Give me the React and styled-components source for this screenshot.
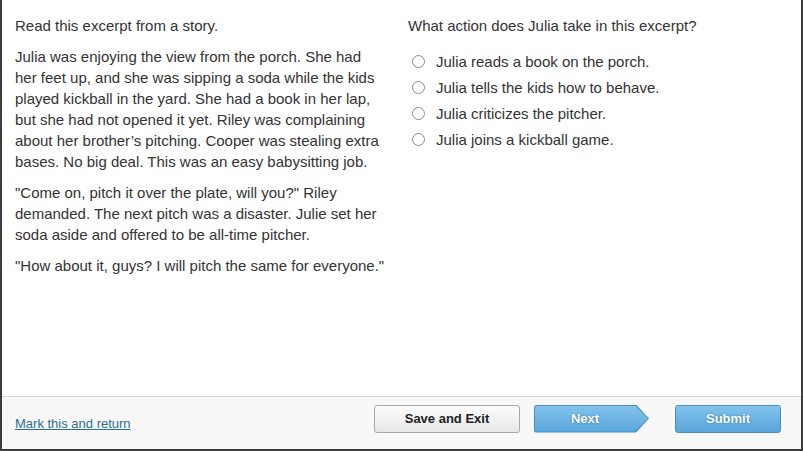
import styled, { createGlobalStyle } from 'styled-components';

const GlobalStyle = createGlobalStyle`
    html, body {
        margin: 0;
        padding: 0;
        background: #fff;
    }
    * {
        box-sizing: border-box;
    }
`;

const Frame = styled.div`
    width: 803px;
    height: 451px;
    display: flex;
    flex-direction: column;
    border-left: 2px solid #3c3c3c;
    border-right: 2px solid #3c3c3c;
    border-bottom: 2px solid #3c3c3c;
    font-family: Arial, 'Liberation Sans', sans-serif;
    color: #333;
    background: #fff;
`;

const Content = styled.div`
    flex: 1;
    display: grid;
    grid-template-columns: 371px 1fr;
    column-gap: 22px;
    padding: 15px 13px 0;
`;

const Passage = styled.div``;

const Para = styled.p`
    margin: 0 0 10px;
    font-size: 15px;
    line-height: 21px;
`;

const Question = styled.div``;

const Prompt = styled.p`
    margin: 0 0 12px;
    font-size: 15px;
    line-height: 21px;
`;

const Options = styled.div`
    display: flex;
    flex-direction: column;
`;

const Option = styled.label`
    display: flex;
    align-items: center;
    height: 26px;
    font-size: 15px;
    cursor: pointer;
`;

const Radio = styled.span`
    width: 13px;
    height: 13px;
    border: 1px solid #8a8a8a;
    border-radius: 50%;
    background: #fff;
    margin: 0 11px 0 4px;
    flex-shrink: 0;
`;

const Footer = styled.div`
    height: 53px;
    border-top: 1px solid #d6d6d6;
    background: #f8f8f8;
    display: flex;
    align-items: center;
    padding: 0 13px;
`;

const MarkLink = styled.a`
    font-size: 13px;
    color: #2b7193;
    text-decoration: underline;
    margin-top: 1px;
    cursor: pointer;
`;

const Buttons = styled.div`
    margin-left: auto;
    display: flex;
    align-items: center;
    margin-right: 7px;
    margin-top: -9px;
`;

const SaveButton = styled.button`
    width: 146px;
    height: 28px;
    border: 1px solid #a8a8a8;
    border-radius: 3px;
    background: linear-gradient(#fdfdfd, #e6e6e6);
    font-family: Arial, 'Liberation Sans', sans-serif;
    font-weight: 700;
    font-size: 13px;
    color: #222;
    cursor: pointer;
`;

const NextOuter = styled.div`
    width: 115px;
    height: 28px;
    margin-left: 14px;
    padding: 1px;
    background: #4b8dbf;
    border-radius: 3px 0 0 3px;
    clip-path: polygon(0 0, calc(100% - 13px) 0, 100% 50%, calc(100% - 13px) 100%, 0 100%);
`;

const NextInner = styled.button`
    width: 100%;
    height: 100%;
    border: none;
    padding: 0 13px 0 0;
    border-radius: 2px 0 0 2px;
    background: linear-gradient(#82c3ed, #5aa6dc);
    clip-path: polygon(0 0, calc(100% - 13px) 0, 100% 50%, calc(100% - 13px) 100%, 0 100%);
    font-family: Arial, 'Liberation Sans', sans-serif;
    font-weight: 700;
    font-size: 13px;
    color: #fff;
    text-shadow: 0 0 2px rgba(40, 90, 140, 0.8);
    cursor: pointer;
`;

const SubmitButton = styled.button`
    width: 106px;
    height: 28px;
    margin-left: 26px;
    border: 1px solid #4b8dbf;
    border-radius: 3px;
    background: linear-gradient(#82c3ed, #5aa6dc);
    font-family: Arial, 'Liberation Sans', sans-serif;
    font-weight: 700;
    font-size: 13px;
    color: #fff;
    text-shadow: 0 0 2px rgba(40, 90, 140, 0.8);
    cursor: pointer;
`;

const options = [
    'Julia reads a book on the porch.',
    'Julia tells the kids how to behave.',
    'Julia criticizes the pitcher.',
    'Julia joins a kickball game.',
];

const App = () => {
    return (
        <>
            <GlobalStyle />
            <Frame>
                <Content>
                    <Passage>
                        <Para>Read this excerpt from a story.</Para>
                        <Para>
                            Julia was enjoying the view from the porch. She had
                            her feet up, and she was sipping a soda while the
                            kids played kickball in the yard. She had a book in
                            her lap, but she had not opened it yet. Riley was
                            complaining about her brother’s pitching. Cooper was
                            stealing extra bases. No big deal. This was an easy
                            babysitting job.
                        </Para>
                        <Para>
                            "Come on, pitch it over the plate, will you?" Riley
                            demanded. The next pitch was a disaster. Julie set
                            her soda aside and offered to be all-time pitcher.
                        </Para>
                        <Para>
                            "How about it, guys? I will pitch the same for
                            everyone."
                        </Para>
                    </Passage>
                    <Question>
                        <Prompt>What action does Julia take in this excerpt?</Prompt>
                        <Options>
                            {options.map((o) => (
                                <Option key={o}>
                                    <Radio />
                                    {o}
                                </Option>
                            ))}
                        </Options>
                    </Question>
                </Content>
                <Footer>
                    <MarkLink>Mark this and return</MarkLink>
                    <Buttons>
                        <SaveButton>Save and Exit</SaveButton>
                        <NextOuter>
                            <NextInner>Next</NextInner>
                        </NextOuter>
                        <SubmitButton>Submit</SubmitButton>
                    </Buttons>
                </Footer>
            </Frame>
        </>
    );
};

export default App;
